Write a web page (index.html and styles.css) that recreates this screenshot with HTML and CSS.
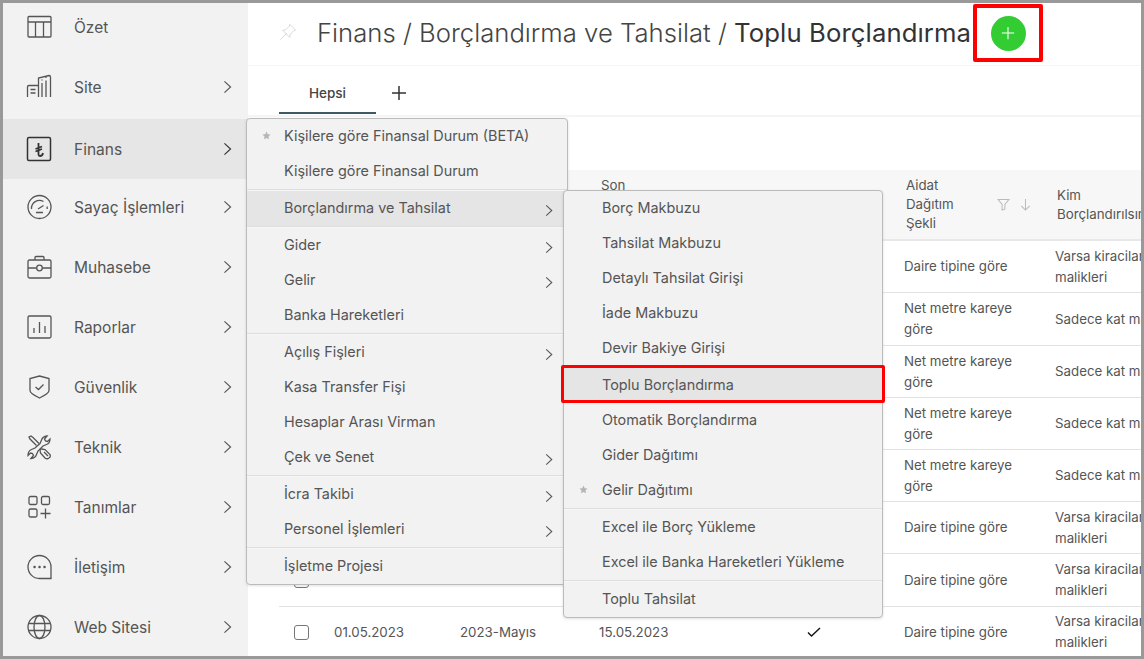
FILE: index.html
```html
<!DOCTYPE html>
<html>
<head>
  <title>Toplu Borçlandırma</title>
  <link rel="stylesheet" href="styles.css">
</head>
<body>
  <div class="screen">
    <nav class="sidebar">
      <a class="nav-item first">
        <svg class="nav-icon" viewBox="0 0 26 26"><rect x="2" y="2.500" width="23" height="20.500" rx="1"/><path d="M2 8h23M9.500 8v15M17.500 8v15"/></svg>
        <span>Özet</span>
      </a>
      <a class="nav-item">
        <svg class="nav-icon" viewBox="0 0 26 26"><path d="M1.500 23V13q0-1.500 1.500-1.500h9.500V23M12.500 11.500V4L23 1.500q1.500 0 1.500 1.500v20M4.500 15.500h5M4.500 19h5M16 9v14M20 6.500V23M16 5.500v1M20 3v1"/></svg>
        <span>Site</span>
        <svg class="chevron" viewBox="0 0 10 16"><path d="M1.500 1.500 8.500 8l-7 6.500"/></svg>
      </a>
      <a class="nav-item active">
        <svg class="nav-icon dark" viewBox="0 0 26 26"><rect x="1.500" y="1.500" width="23" height="23" rx="1.500"/><path class="lira" d="M12.500 7v11.500q0 1.500 1.500 1.500 2.500 0 3-3M9.500 13l6.500-2.500M9.500 15.500l6.500-2.500"/></svg>
        <span>Finans</span>
        <svg class="chevron" viewBox="0 0 10 16"><path d="M1.500 1.500 8.500 8l-7 6.500"/></svg>
      </a>
      <a class="nav-item">
        <svg class="nav-icon" viewBox="0 0 26 26"><circle cx="13.500" cy="13" r="11.500"/><path d="M5.500 15a8 8 0 0 1 12-7.500M21 12.500q.3 1.200.2 2.500M12 15l5.500-3.500M10 18.500h7"/></svg>
        <span>Sayaç İşlemleri</span>
        <svg class="chevron" viewBox="0 0 10 16"><path d="M1.500 1.500 8.500 8l-7 6.500"/></svg>
      </a>
      <a class="nav-item">
        <svg class="nav-icon" viewBox="0 0 26 26"><rect x="2" y="6" width="23" height="18" rx="1.500"/><path d="M9 6V3.500q0-1 1-1h7q1 0 1 1V6M2 14h8.500M16.500 14H25"/><circle cx="13.500" cy="14" r="2.800"/></svg>
        <span>Muhasebe</span>
        <svg class="chevron" viewBox="0 0 10 16"><path d="M1.500 1.500 8.500 8l-7 6.500"/></svg>
      </a>
      <a class="nav-item">
        <svg class="nav-icon" viewBox="0 0 26 26"><rect x="2" y="2" width="23" height="22" rx="1.500"/><path d="M8 19v-5M13.500 19V8M19 19v-7"/></svg>
        <span>Raporlar</span>
        <svg class="chevron" viewBox="0 0 10 16"><path d="M1.500 1.500 8.500 8l-7 6.500"/></svg>
      </a>
      <a class="nav-item">
        <svg class="nav-icon" viewBox="0 0 26 26"><path d="M13.500 2 23 4.500v12q0 3-9.500 7.500Q4 19.500 4 16.500v-12ZM9.500 13l3 2.500 5-5"/></svg>
        <span>Güvenlik</span>
        <svg class="chevron" viewBox="0 0 10 16"><path d="M1.500 1.500 8.500 8l-7 6.500"/></svg>
      </a>
      <a class="nav-item">
        <svg class="nav-icon" viewBox="0 0 26 26"><path d="M14 9.500 15.500 6q1-3.500 5.500-4l-2.500 3 1 2 2 .500L24 5q0 4.500-3.500 5.500L17 12l-5 5-1.500 3.500q-1 3.500-5.500 4l2.500-3-1-2-2-.500L2 21.500q0-4.500 3.500-6L9 14Z"/><path d="M10.500 11.500 4 5 3 3l2-1 2 1.500 6 6M15.500 15l3.500.5 5 5q1 2.500-1 3.500-2 1.500-4 0l-4.500-5-.5-3.500ZM18 18l4 4"/></svg>
        <span>Teknik</span>
        <svg class="chevron" viewBox="0 0 10 16"><path d="M1.500 1.500 8.500 8l-7 6.500"/></svg>
      </a>
      <a class="nav-item">
        <svg class="nav-icon" viewBox="0 0 26 26"><rect x="3" y="2.500" width="8" height="8" rx="1.500"/><rect x="15.500" y="2.500" width="8" height="8" rx="1.500"/><rect x="3" y="15" width="8" height="8" rx="1.500"/><path d="M14.500 19.500h10M19.500 14.500v10"/></svg>
        <span>Tanımlar</span>
        <svg class="chevron" viewBox="0 0 10 16"><path d="M1.500 1.500 8.500 8l-7 6.500"/></svg>
      </a>
      <a class="nav-item">
        <svg class="nav-icon" viewBox="0 0 26 26"><path d="M25 24.500H13.500A11.500 11.500 0 1 1 25 13Z"/><path class="dots" d="M8.500 13h.1M13.500 13h.1M18.500 13h.1"/></svg>
        <span>İletişim</span>
        <svg class="chevron" viewBox="0 0 10 16"><path d="M1.500 1.500 8.500 8l-7 6.500"/></svg>
      </a>
      <a class="nav-item">
        <svg class="nav-icon" viewBox="0 0 26 26"><circle cx="13.500" cy="13" r="11.500"/><ellipse cx="13.500" cy="13" rx="5.500" ry="11.500"/><path d="M2.500 9.500h22M2.500 16.500h22"/></svg>
        <span>Web Sitesi</span>
        <svg class="chevron" viewBox="0 0 10 16"><path d="M1.500 1.500 8.500 8l-7 6.500"/></svg>
      </a>
    </nav>

    <main class="content">
      <header class="title-bar">
        <svg class="pin" viewBox="0 0 20 20"><path d="M12 1.500 18.500 8l-2 .500-4 4-.500 3.500-8-8 3.500-.500 4-4ZM8 12l-6.500 6.500"/></svg>
        <h1>Finans / Borçlandırma ve Tahsilat / <strong>Toplu Borçlandırma</strong></h1>
        <div class="callout">
          <button class="add-btn"><svg viewBox="0 0 16 16"><path d="M8 1v14M1 8h14"/></svg></button>
        </div>
      </header>

      <div class="tabs">
        <div class="tab">Hepsi</div>
        <svg class="tab-add" viewBox="0 0 14 14"><path d="M7 0v14M0 7h14"/></svg>
      </div>

      <table class="grid">
        <colgroup>
          <col class="col-check"><col class="col-date"><col class="col-term"><col class="col-due"><col class="col-ok"><col class="col-share"><col class="col-who">
        </colgroup>
        <thead>
          <tr>
            <th></th>
            <th>Tarih</th>
            <th>Dönem</th>
            <th>Son<br>Ödeme<br>Tarihi</th>
            <th>Onaylı</th>
            <th>
              <div class="th-flex">
                <span>Aidat<br>Dağıtım<br>Şekli</span>
                <svg class="th-icon" viewBox="0 0 14 14"><path d="M1 1.500h12L8.500 7v5l-3 1V7Z"/></svg>
                <svg class="th-icon" viewBox="0 0 14 14"><path d="M7 1v12M2.500 8.500 7 13l4.500-4.500"/></svg>
              </div>
            </th>
            <th>Kim<br>Borçlandırılsın</th>
          </tr>
        </thead>
        <tbody>
          <tr><td><i class="box"></i></td><td>01.12.2023</td><td>2023-Aralık</td><td>15.12.2023</td><td></td><td>Daire tipine göre</td><td>Varsa kiracilar yoksa kat<br>malikleri</td></tr>
          <tr class="tall"><td><i class="box"></i></td><td>01.11.2023</td><td>2023-Kasım</td><td>15.11.2023</td><td></td><td>Net metre kareye<br>göre</td><td>Sadece kat malikleri</td></tr>
          <tr><td><i class="box"></i></td><td>01.10.2023</td><td>2023-Ekim</td><td>15.10.2023</td><td></td><td>Net metre kareye<br>göre</td><td>Sadece kat malikleri</td></tr>
          <tr><td><i class="box"></i></td><td>01.09.2023</td><td>2023-Eylül</td><td>15.09.2023</td><td></td><td>Net metre kareye<br>göre</td><td>Sadece kat malikleri</td></tr>
          <tr><td><i class="box"></i></td><td>01.08.2023</td><td>2023-Ağustos</td><td>15.08.2023</td><td></td><td>Net metre kareye<br>göre</td><td>Sadece kat malikleri</td></tr>
          <tr><td><i class="box"></i></td><td>01.07.2023</td><td>2023-Temmuz</td><td>15.07.2023</td><td></td><td>Daire tipine göre</td><td>Varsa kiracilar yoksa kat<br>malikleri</td></tr>
          <tr class="tall"><td><i class="box"></i></td><td>01.06.2023</td><td>2023-Haziran</td><td>15.06.2023</td><td></td><td>Daire tipine göre</td><td>Varsa kiracilar yoksa kat<br>malikleri</td></tr>
          <tr class="last"><td><i class="box"></i></td><td>01.05.2023</td><td>2023-Mayıs</td><td>15.05.2023</td><td><svg class="tick" viewBox="0 0 14 10"><path d="M1 5.500 4.500 9 13 1"/></svg></td><td>Daire tipine göre</td><td>Varsa kiracilar yoksa kat<br>malikleri</td></tr>
        </tbody>
      </table>
    </main>

    <div class="menu menu-main">
      <div class="menu-item"><svg class="star" viewBox="0 0 10 10"><path d="M5 .5l1.400 3 3.100.4-2.300 2.100.6 3.200L5 7.700 2.200 9.200l.6-3.200L.5 3.900l3.100-.4Z"/></svg>Kişilere göre Finansal Durum (BETA)</div>
      <div class="menu-item">Kişilere göre Finansal Durum</div>
      <div class="menu-sep"></div>
      <div class="menu-item current">Borçlandırma ve Tahsilat<svg class="menu-arrow" viewBox="0 0 10 16"><path d="M1.500 1.500 8.500 8l-7 6.500"/></svg></div>
      <div class="menu-sep"></div>
      <div class="menu-item">Gider<svg class="menu-arrow" viewBox="0 0 10 16"><path d="M1.500 1.500 8.500 8l-7 6.500"/></svg></div>
      <div class="menu-item">Gelir<svg class="menu-arrow" viewBox="0 0 10 16"><path d="M1.500 1.500 8.500 8l-7 6.500"/></svg></div>
      <div class="menu-item">Banka Hareketleri</div>
      <div class="menu-sep"></div>
      <div class="menu-item">Açılış Fişleri<svg class="menu-arrow" viewBox="0 0 10 16"><path d="M1.500 1.500 8.500 8l-7 6.500"/></svg></div>
      <div class="menu-item">Kasa Transfer Fişi</div>
      <div class="menu-item">Hesaplar Arası Virman</div>
      <div class="menu-item">Çek ve Senet<svg class="menu-arrow" viewBox="0 0 10 16"><path d="M1.500 1.500 8.500 8l-7 6.500"/></svg></div>
      <div class="menu-sep"></div>
      <div class="menu-item">İcra Takibi<svg class="menu-arrow" viewBox="0 0 10 16"><path d="M1.500 1.500 8.500 8l-7 6.500"/></svg></div>
      <div class="menu-item">Personel İşlemleri<svg class="menu-arrow" viewBox="0 0 10 16"><path d="M1.500 1.500 8.500 8l-7 6.500"/></svg></div>
      <div class="menu-sep"></div>
      <div class="menu-item">İşletme Projesi</div>
    </div>

    <div class="menu menu-sub">
      <div class="menu-item">Borç Makbuzu</div>
      <div class="menu-item">Tahsilat Makbuzu</div>
      <div class="menu-item">Detaylı Tahsilat Girişi</div>
      <div class="menu-item">İade Makbuzu</div>
      <div class="menu-item">Devir Bakiye Girişi</div>
      <div class="menu-sep"></div>
      <div class="menu-item current marked">Toplu Borçlandırma</div>
      <div class="menu-item">Otomatik Borçlandırma</div>
      <div class="menu-item">Gider Dağıtımı</div>
      <div class="menu-item"><svg class="star" viewBox="0 0 10 10"><path d="M5 .5l1.400 3 3.100.4-2.300 2.100.6 3.200L5 7.700 2.200 9.200l.6-3.200L.5 3.900l3.100-.4Z"/></svg>Gelir Dağıtımı</div>
      <div class="menu-sep"></div>
      <div class="menu-item">Excel ile Borç Yükleme</div>
      <div class="menu-item">Excel ile Banka Hareketleri Yükleme</div>
      <div class="menu-sep"></div>
      <div class="menu-item">Toplu Tahsilat</div>
    </div>
  </div>
</body>
</html>
```

FILE: styles.css
```css
html, body {
  height: 100%;
}

body {
  background-color: #999;
  font-family: Inter, "Liberation Sans", sans-serif;
  color: #555;
  margin: 0;
  padding: 3px;
  box-sizing: border-box;
  overflow: hidden;
}

.screen {
  position: relative;
  display: flex;
  height: 653px;
  background-color: #fff;
  overflow: hidden;
}

svg {
  fill: none;
  stroke: currentColor;
  display: block;
}

/* sidebar */
.sidebar {
  width: 245px;
  flex: none;
  background-color: #f2f2f2;
}

.nav-item {
  display: flex;
  align-items: center;
  box-sizing: border-box;
  height: 60px;
  padding: 0 16px 4px 23px;
  font-size: 15.500px;
  color: #555;
}

.nav-item.first {
  height: 56px;
  padding-bottom: 8px;
}

.nav-item.active {
  background-color: #e6e6e6;
  padding-bottom: 0;
}

.nav-icon {
  width: 26px;
  height: 26px;
  margin-right: 22px;
  flex: none;
  color: #555;
  stroke-width: 1.3;
}

.nav-icon.dark {
  color: #333;
  stroke-width: 1.5;
}

.nav-icon .lira {
  stroke-width: 1.8;
}

.nav-icon .dots {
  stroke-width: 2.4;
  stroke-linecap: round;
}

.chevron {
  width: 9px;
  height: 14px;
  margin-left: auto;
  color: #555;
  stroke-width: 1.3;
}

.active .chevron {
  color: #333;
}

/* main area */
.content {
  flex: 1;
  min-width: 0;
}

.title-bar {
  display: flex;
  align-items: flex-start;
  box-sizing: border-box;
  height: 63px;
  padding-left: 31px;
  border-bottom: 1px solid #f5f5f5;
}

.pin {
  width: 18px;
  height: 18px;
  margin: 20px 20px 0 0;
  color: #d8d8d8;
  stroke-width: 1.1;
}

h1 {
  margin: 0;
  padding-top: 13px;
  font-size: 25.700px;
  line-height: 34px;
  font-weight: 300;
  color: #444;
  white-space: nowrap;
}

h1 strong {
  font-weight: 400;
  letter-spacing: .1px;
  color: #333;
}

.callout {
  display: flex;
  align-items: center;
  justify-content: center;
  flex: none;
  box-sizing: border-box;
  width: 70px;
  height: 58px;
  margin: 1px 0 0 2px;
  border: 4px solid #f00;
  border-radius: 2px;
}

.add-btn {
  display: flex;
  align-items: center;
  justify-content: center;
  width: 35px;
  height: 35px;
  padding: 0;
  border: 0;
  border-radius: 50%;
  background-color: #33cc33;
  color: #fff;
}

.add-btn svg {
  width: 14px;
  height: 14px;
  stroke-width: 1.2;
}

.tabs {
  display: flex;
  align-items: flex-start;
  box-sizing: border-box;
  height: 51px;
  padding-left: 31px;
  border-bottom: 2px solid #f5f5f5;
}

.tab {
  box-sizing: border-box;
  width: 97px;
  height: 48px;
  padding-top: 15px;
  text-align: center;
  font-size: 13.500px;
  line-height: 24px;
  font-weight: 500;
  color: #444;
  border-bottom: 2px solid #3d5a64;
}

.tab-add {
  width: 14px;
  height: 14px;
  margin: 20px 0 0 16px;
  color: #333;
  stroke-width: 1.5;
}

/* table */
.grid {
  margin: 53px 0 0 31px;
  width: 900px;
  table-layout: fixed;
  border-collapse: collapse;
  font-size: 13.300px;
}

.col-check { width: 55px; }
.col-date { width: 126px; }
.col-term { width: 139px; }
.col-due { width: 150px; }
.col-ok { width: 155px; }
.col-share { width: 151px; }
.col-who { width: 124px; }

th {
  height: 69px;
  padding: 0 0 0 2px;
  background-color: #f7f7f7;
  border-bottom: 2px solid #e8e8e8;
  font-size: 13.300px;
  line-height: 19px;
  font-weight: 400;
  text-align: left;
  color: #555;
  white-space: nowrap;
}

td {
  height: 51px;
  padding: 0;
  line-height: 21px;
  border-bottom: 1px solid #e3e3e3;
  color: #555;
  white-space: nowrap;
}

.tall td {
  height: 52px;
}

.last td {
  height: 50px;
  border-bottom: 0;
}

.box {
  display: block;
  box-sizing: border-box;
  width: 15px;
  height: 15px;
  margin-left: 15px;
  border: 1px solid #777;
  border-radius: 3px;
}

.tick {
  width: 14px;
  height: 10px;
  margin-left: 58px;
  color: #111;
  stroke-width: 1.4;
}

.th-flex {
  display: flex;
  align-items: center;
}

.th-icon {
  width: 13px;
  height: 13px;
  margin-left: 9px;
  color: #bbb;
  stroke-width: 1.1;
}

.th-flex span + .th-icon {
  margin-left: auto;
}

.th-flex .th-icon:last-child {
  margin-right: 23px;
}

/* menus, open over the table */
.menu {
  position: absolute;
  box-sizing: border-box;
  background-color: #f2f2f2;
  border: 1px solid #bbb;
  border-radius: 4px;
  box-shadow: 0 1px 3px rgba(0, 0, 0, .12);
}

.menu-main {
  left: 243px;
  top: 115px;
  width: 322px;
}

.menu-sub {
  left: 560px;
  top: 187px;
  width: 320px;
}

.menu-item {
  position: relative;
  display: flex;
  align-items: center;
  box-sizing: border-box;
  height: 35px;
  padding: 0 0 2px 37px;
  font-size: 14.400px;
  color: #555;
  white-space: nowrap;
}

.menu-sub .menu-item {
  padding-left: 38px;
}

.menu-item.current {
  background-color: #e5e5e5;
}

.menu-sep {
  height: 1px;
  background-color: #ddd;
  border-bottom: 1px solid #f7f7f7;
}

.menu-arrow {
  position: absolute;
  right: 14px;
  top: 13px;
  width: 8px;
  height: 13px;
  color: #555;
  stroke-width: 1.3;
}

.star {
  position: absolute;
  left: 15px;
  top: 12px;
  width: 9px;
  height: 9px;
  fill: #b5b5b5;
  stroke: none;
}

.menu-item.marked::after {
  content: "";
  position: absolute;
  left: -3px;
  right: -3px;
  top: -3px;
  bottom: 0;
  border: 3px solid #f00;
  border-radius: 2px;
}
```
